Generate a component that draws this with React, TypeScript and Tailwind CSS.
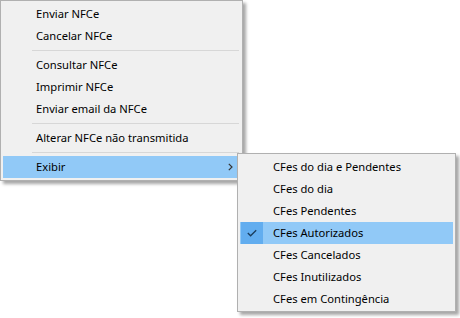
import React from 'react';

type Entry = { label?: string; sep?: boolean; active?: boolean; sub?: boolean; checked?: boolean };

const mainItems: Entry[] = [
  { label: 'Enviar NFCe' },
  { label: 'Cancelar NFCe' },
  { sep: true },
  { label: 'Consultar NFCe' },
  { label: 'Imprimir NFCe' },
  { label: 'Enviar email da NFCe' },
  { sep: true },
  { label: 'Alterar NFCe não transmitida' },
  { sep: true },
  { label: 'Exibir', active: true, sub: true },
];

const subItems: Entry[] = [
  { label: 'CFes do dia e Pendentes' },
  { label: 'CFes do dia' },
  { label: 'CFes Pendentes' },
  { label: 'CFes Autorizados', active: true, checked: true },
  { label: 'CFes Cancelados' },
  { label: 'CFes Inutilizados' },
  { label: 'CFes em Contingência' },
];

function Row({ item }: { item: Entry }) {
  if (item.sep) {
    return (
      <div className="h-[7px] flex items-center pl-[31px] pr-[3px]">
        <div className="h-px w-full bg-[#d7d7d7]" />
      </div>
    );
  }
  return (
    <div className={`mx-[2px] h-[22px] flex items-center ${item.active ? 'bg-[#91c9f7]' : ''}`}>
      <div className={`w-[22px] h-full ml-px flex items-center justify-center ${item.checked ? 'bg-[#62adef]' : ''}`}>
        {item.checked && (
          <svg width="10" height="8" viewBox="0 0 10 8">
            <polyline points="0.8,4 3.6,6.8 9.2,1.2" fill="none" stroke="#1b3d5c" strokeWidth="1.3" />
          </svg>
        )}
      </div>
      <span className="ml-[10px] flex-1 text-[11.2px] leading-none text-black">{item.label}</span>
      {item.sub && (
        <svg width="5" height="8" viewBox="0 0 5 8" className="mr-[7px]">
          <polyline points="0.8,0.8 4,4 0.8,7.2" fill="none" stroke="#333" strokeWidth="1.2" />
        </svg>
      )}
    </div>
  );
}

export default function App() {
  return (
    <div
      className="relative w-[460px] h-[318px] bg-white overflow-hidden"
      style={{ fontFamily: '"Noto Sans", "Open Sans", sans-serif' }}
    >
      <div className="absolute left-0 top-0 w-[243px] h-[181px] bg-[#f0f0f0] border border-[#b0b0b0] py-[2px] shadow-[3px_3px_3px_rgba(0,0,0,0.35)]">
        {mainItems.map((it, i) => (
          <Row key={i} item={it} />
        ))}
      </div>
      <div className="absolute left-[237px] top-[153px] w-[219px] h-[159px] bg-[#f0f0f0] border border-[#b0b0b0] py-[2px] shadow-[3px_3px_3px_rgba(0,0,0,0.35)]">
        {subItems.map((it, i) => (
          <Row key={i} item={it} />
        ))}
      </div>
    </div>
  );
}
